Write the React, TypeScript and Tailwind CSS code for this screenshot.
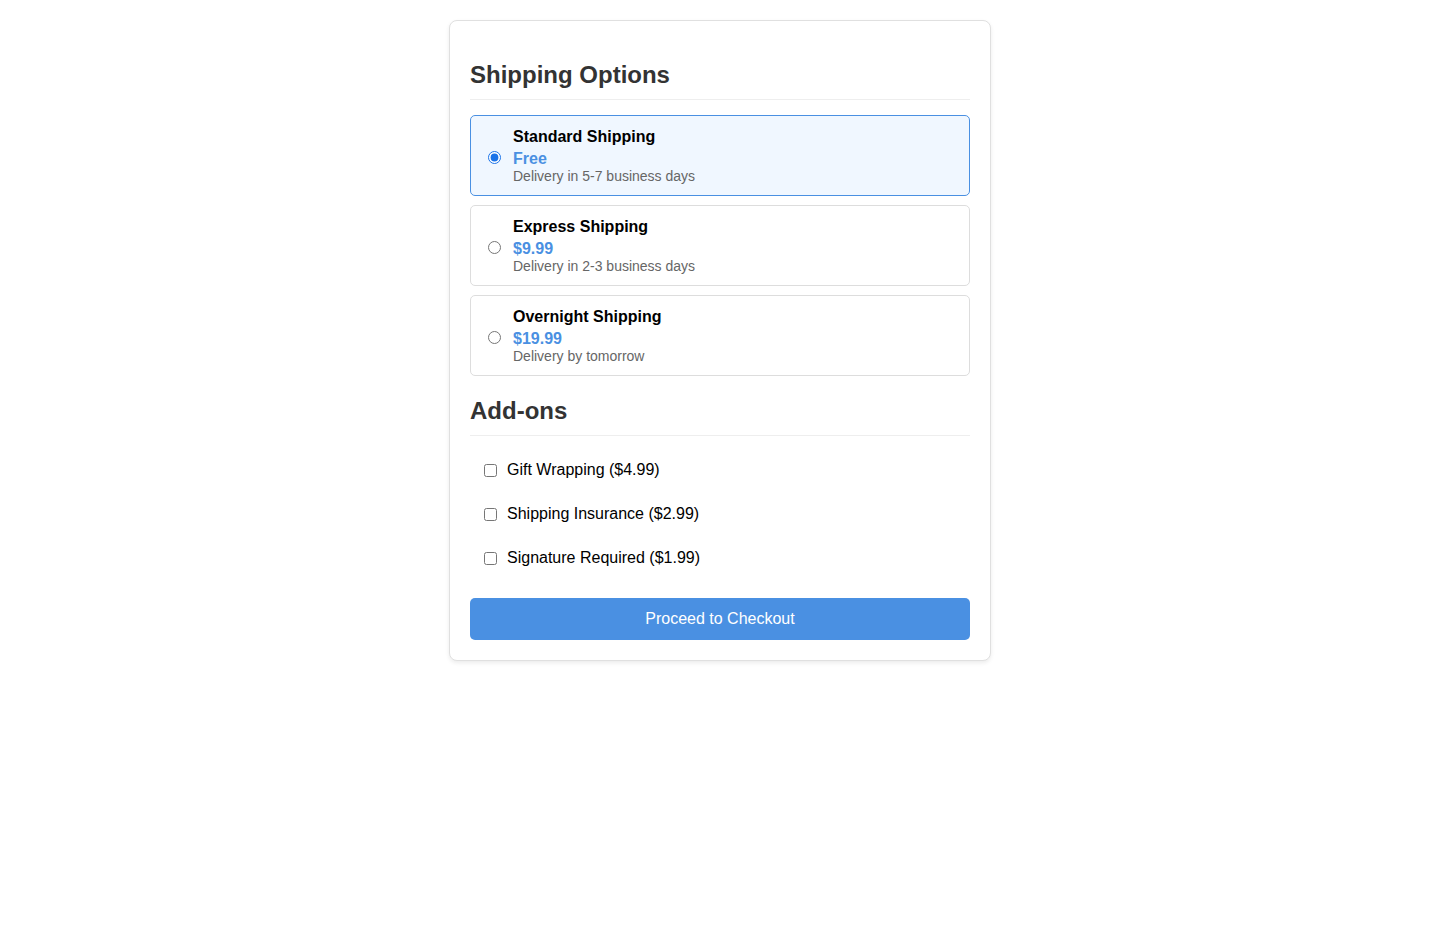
import React, { useState } from "react";

const options = [
  { id: "standard", name: "Standard Shipping", price: "Free", time: "Delivery in 5-7 business days" },
  { id: "express", name: "Express Shipping", price: "$9.99", time: "Delivery in 2-3 business days" },
  { id: "overnight", name: "Overnight Shipping", price: "$19.99", time: "Delivery by tomorrow" },
];

const addons = [
  { id: "gift", label: "Gift Wrapping ($4.99)" },
  { id: "insurance", label: "Shipping Insurance ($2.99)" },
  { id: "signature", label: "Signature Required ($1.99)" },
];

export default function App() {
  const [selected, setSelected] = useState("standard");
  const [checked, setChecked] = useState<Record<string, boolean>>({});

  return (
    <div className="min-h-screen bg-white font-['Liberation_Sans',Arial,sans-serif] pt-[20px]">
      <div className="mx-auto w-[542px] rounded-lg border border-[#e0e0e0] bg-white px-[20px] pb-[20px] pt-[20px] shadow-[0_2px_4px_rgba(0,0,0,0.08)]">
        <h2 className="mt-[20px] border-b border-[#eee] pb-[10px] text-[24px] font-bold leading-[28px] text-[#333]">
          Shipping Options
        </h2>
        <div className="mt-[15px] flex flex-col gap-[9px]">
          {options.map((o) => {
            const active = selected === o.id;
            return (
              <label
                key={o.id}
                className={
                  "flex cursor-pointer items-center rounded-[5px] border px-[15px] pb-[11px] pt-[12px] " +
                  (active ? "border-[#4a90e2] bg-[#f0f7ff]" : "border-[#ddd] bg-white")
                }
              >
                <input
                  type="radio"
                  name="shipping"
                  checked={active}
                  onChange={() => setSelected(o.id)}
                  className="ml-[2px] mr-[12px] mt-[2px] h-[13px] w-[13px] accent-[#1a73e8]"
                />
                <div className="flex flex-col">
                  <span className="text-[16px] font-bold leading-[18px] text-black">{o.name}</span>
                  <span className="mt-[4px] text-[16px] font-bold leading-[18px] text-[#4a90e2]">{o.price}</span>
                  <span className="text-[14px] leading-[16px] text-[#666]">{o.time}</span>
                </div>
              </label>
            );
          })}
        </div>

        <h2 className="mt-[21px] border-b border-[#eee] pb-[10px] text-[24px] font-bold leading-[28px] text-[#333]">
          Add-ons
        </h2>
        <div className="mt-[12px] flex flex-col">
          {addons.map((a) => (
            <label key={a.id} className="flex h-[44px] cursor-pointer items-center pl-[14px]">
              <input
                type="checkbox"
                checked={!!checked[a.id]}
                onChange={() => setChecked({ ...checked, [a.id]: !checked[a.id] })}
                className="mr-[10px] h-[13px] w-[13px]"
              />
              <span className="text-[16px] text-black">{a.label}</span>
            </label>
          ))}
        </div>

        <button className="mt-[18px] h-[42px] w-full rounded-[5px] bg-[#4a90e2] text-[16px] text-white">
          Proceed to Checkout
        </button>
      </div>
    </div>
  );
}
